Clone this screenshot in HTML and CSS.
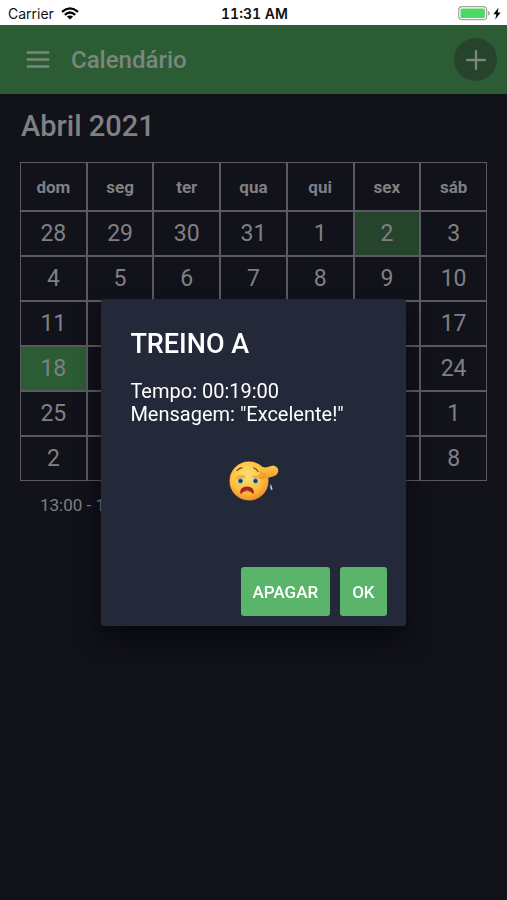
FILE: index.html
```html
<!DOCTYPE html>
<html lang="pt-BR">
<head>
    <title>Calendário</title>
    <meta charset="UTF-8">
    <meta name="viewport" content="width=device-width, initial-scale=1.0">
    <link rel="stylesheet" href="styles.css">
</head>
<body>
    <div class="status-bar">
        <div class="status-left">
            <span>Carrier</span>
            <svg class="wifi" width="18" height="13" viewBox="0 0 18 13" fill="none" stroke="#000" stroke-width="2.3">
                <path d="M1 4.8Q9-2 17 4.8"/>
                <path d="M3.8 7.8Q9 3.3 14.2 7.8"/>
                <path d="M9 12.6L5.9 9.6Q9 7.2 12.1 9.6Z" fill="#000" stroke="none"/>
            </svg>
        </div>
        <span class="status-time">11:31 AM</span>
        <div class="status-right">
            <svg width="32" height="15" viewBox="0 0 32 15">
                <rect x="0.7" y="0.7" width="28" height="13" rx="3.5" fill="#fff" stroke="#a3a3a6" stroke-width="1.2"/>
                <rect x="2.5" y="2.5" width="24.4" height="9.4" rx="1.5" fill="#4cd964"/>
                <path d="M30 5Q31.8 5.5 31.8 7.2T30 9.5Z" fill="#a3a3a6"/>
            </svg>
            <svg width="8" height="13" viewBox="0 0 8 13">
                <path d="M5.6 0.5L0.4 7.2H3.4L2.2 12.5L7.6 5.4H4.6Z" fill="#000"/>
            </svg>
        </div>
    </div>

    <header class="toolbar">
        <button class="menu-button" aria-label="Menu">
            <svg width="24" height="18" viewBox="0 0 24 18" stroke="#7b877d" stroke-width="2.4" stroke-linecap="round">
                <path d="M1.8 1.5H22.2M1.8 8.5H22.2M1.8 15.5H22.2"/>
            </svg>
        </button>
        <h1>Calendário</h1>
        <button class="add-button" aria-label="Adicionar">
            <svg width="20" height="20" viewBox="0 0 20 20" stroke="#7b877d" stroke-width="2.4" stroke-linecap="round">
                <path d="M10 1.2V18.8M1.2 10H18.8"/>
            </svg>
        </button>
    </header>

    <main class="content">
        <h2>Abril 2021</h2>
        <table class="calendar">
            <thead>
                <tr><th>dom</th><th>seg</th><th>ter</th><th>qua</th><th>qui</th><th>sex</th><th>sáb</th></tr>
            </thead>
            <tbody>
                <tr><td>28</td><td>29</td><td>30</td><td>31</td><td>1</td><td class="marked">2</td><td>3</td></tr>
                <tr><td>4</td><td>5</td><td>6</td><td>7</td><td>8</td><td>9</td><td>10</td></tr>
                <tr><td>11</td><td>12</td><td>13</td><td>14</td><td>15</td><td>16</td><td>17</td></tr>
                <tr><td class="selected">18</td><td>19</td><td>20</td><td>21</td><td>22</td><td>23</td><td>24</td></tr>
                <tr><td>25</td><td>26</td><td>27</td><td>28</td><td>29</td><td>30</td><td>1</td></tr>
                <tr><td>2</td><td>3</td><td>4</td><td>5</td><td>6</td><td>7</td><td>8</td></tr>
            </tbody>
        </table>
        <p class="event">13:00 - 13:19</p>
    </main>

    <div class="overlay">
        <div class="dialog" role="dialog" aria-labelledby="dialogTitle">
            <h3 id="dialogTitle">TREINO A</h3>
            <p>Tempo: 00:19:00<br>Mensagem: "Excelente!"</p>
            <svg class="emoji" width="52" height="42" viewBox="0 0 52 42">
                <defs>
                    <radialGradient id="face" cx="45%" cy="35%" r="65%">
                        <stop offset="0" stop-color="#ffe071"/>
                        <stop offset="0.65" stop-color="#fdbf3f"/>
                        <stop offset="1" stop-color="#ee8f2b"/>
                    </radialGradient>
                    <linearGradient id="hand" x1="0" y1="0" x2="0" y2="1">
                        <stop offset="0" stop-color="#ffc847"/>
                        <stop offset="1" stop-color="#ef9a26"/>
                    </linearGradient>
                </defs>
                <circle cx="21" cy="21" r="19.5" fill="url(#face)"/>
                <ellipse cx="12.5" cy="19.8" rx="3.6" ry="3.7" fill="#e4e6d0"/>
                <ellipse cx="27.5" cy="19.8" rx="3.6" ry="3.7" fill="#e4e6d0"/>
                <circle cx="12.5" cy="20.8" r="2.6" fill="#3a8095"/>
                <circle cx="27.5" cy="20.8" r="2.6" fill="#3a8095"/>
                <circle cx="12.5" cy="21" r="1.5" fill="#193540"/>
                <circle cx="27.5" cy="21" r="1.5" fill="#193540"/>
                <path d="M7.5 19Q9 13.5 17.5 15.5L17 18.5Q12 17 8 20ZM23 18Q25.5 13.5 32 17L32.5 19.5Q28 17 23 18Z" fill="#f1ae38"/>
                <path d="M9 10.6Q11 7.8 14 7.8M25.5 8Q28.5 8.5 30 11.5" fill="none" stroke="#6d471b" stroke-width="1.2" stroke-linecap="round"/>
                <path d="M12 33Q12 26.5 19 26.5T26 33Q25 34.5 23.5 32.5Q19 28.5 14.5 32.5Q13 34.5 12 33Z" fill="#a5222b"/>
                <path d="M14.8 32.2Q19 28.6 23.2 32.2Q19 31.2 14.8 32.2Z" fill="#ef6868"/>
                <path d="M31 10Q33 5.5 38 7.5L45 5.5Q50.5 6.5 50.3 11Q50 15 45 16.5L38 18.5Q34 20.5 30.5 18.5Q29 15 32.5 13Z" fill="url(#hand)"/>
                <path d="M32 11Q34 15 38 14.5M32 17Q35 18 38 16" fill="none" stroke="#df8e26" stroke-width="0.8"/>
                <path d="M42.3 24Q45 28 44.3 29.7Q43 30.5 42.3 28Z" fill="#b6d7e4"/>
            </svg>
            <div class="dialog-actions">
                <button class="button">APAGAR</button>
                <button class="button">OK</button>
            </div>
        </div>
    </div>
</body>
</html>
```
FILE: styles.css
```css
:root {
    --bg: #11121a;
    --header: #2c5c34;
    --dialog: #232938;
    --button: #5ab56a;
    --muted: #808083;
    --line: #5b5b5f;
}

* { margin: 0; padding: 0; box-sizing: border-box; }

body {
    font-family: Roboto, "Liberation Sans", sans-serif;
    background: var(--bg);
    color: var(--muted);
    min-height: 100vh;
}

.status-bar {
    display: grid;
    grid-template-columns: 1fr auto 1fr;
    align-items: center;
    height: 25px;
    padding: 2px 6px 0 8px;
    background: #fff;
    color: #111;
    font-family: Inter, sans-serif;
    font-size: 14px;
}

.status-left, .status-right {
    display: flex;
    align-items: center;
    gap: 7px;
}

.status-right {
    justify-content: flex-end;
    gap: 3px;
}

.status-time {
    font-weight: 600;
    font-variant-numeric: tabular-nums;
}

.toolbar {
    display: flex;
    align-items: center;
    height: 69px;
    padding: 0 10px 0 26px;
    background: var(--header);
}

.toolbar h1 {
    margin-left: 21px;
    font-size: 24px;
    font-weight: 500;
    color: #7b877d;
}

.menu-button, .add-button {
    display: flex;
    align-items: center;
    justify-content: center;
    border: none;
    background: none;
    cursor: pointer;
}

.add-button {
    width: 43px;
    height: 43px;
    margin-left: auto;
    border-radius: 50%;
    background: #26432c;
}

.content { padding: 14px 20px 20px 20px; }

.content h2 {
    padding-left: 1px;
    font-size: 29px;
    font-weight: 500;
    line-height: 36px;
    margin-bottom: 18px;
}

.calendar {
    width: 100%;
    table-layout: fixed;
    border-collapse: separate;
    border-spacing: 0;
    text-align: center;
}

.calendar th, .calendar td {
    border: 1px solid var(--line);
    vertical-align: middle;
}

.calendar th {
    height: 49px;
    font-size: 17px;
    font-weight: 700;
}

.calendar td {
    height: 45px;
    font-size: 23px;
}

.calendar .marked { background: #26432c; }
.calendar .selected { background: #2c5c34; }

.event {
    margin: 12px 20px;
    font-size: 17px;
    line-height: 24px;
}

.overlay {
    position: fixed;
    inset: 25px 0 0;
    display: flex;
    align-items: center;
    justify-content: center;
}

.dialog {
    display: flex;
    flex-direction: column;
    width: 60%;
    padding: 30px 0 10px;
    border-radius: 3px;
    background: var(--dialog);
    color: #fff;
    box-shadow: 0 14px 24px rgba(0,0,0,0.5);
}

.dialog h3 {
    padding: 0 29px;
    font-size: 27px;
    font-weight: 500;
    line-height: 30px;
    margin-bottom: 21px;
}

.dialog p {
    padding: 0 29px;
    font-size: 20px;
    line-height: 23px;
    margin-bottom: 34px;
}

.emoji {
    align-self: center;
    margin-bottom: 65px;
}

.dialog-actions {
    display: flex;
    justify-content: flex-end;
    gap: 10px;
    padding: 0 19px;
}

.button {
    height: 49px;
    padding: 0 12px;
    border: none;
    border-radius: 3px;
    background: var(--button);
    color: #fff;
    font-family: inherit;
    font-size: 17px;
    font-weight: 500;
    cursor: pointer;
}

.button:hover { opacity: 0.9; }
```
